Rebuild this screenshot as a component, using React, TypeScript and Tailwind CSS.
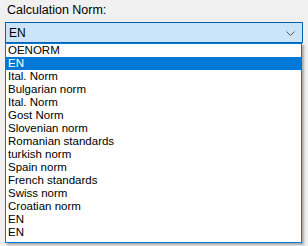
import React from "react";

const items = [
  "OENORM",
  "EN",
  "Ital. Norm",
  "Bulgarian norm",
  "Ital. Norm",
  "Gost Norm",
  "Slovenian norm",
  "Romanian standards",
  "turkish norm",
  "Spain norm",
  "French standards",
  "Swiss norm",
  "Croatian norm",
  "EN",
  "EN",
];

export default function App() {
  return (
    <div
      className="w-[308px] h-[246px] bg-[#f0f0f0] text-black overflow-hidden"
      style={{ fontFamily: '"Liberation Sans", Arial, sans-serif' }}
    >
      <div className="pl-[7px] pt-[3px] h-[22px] text-[12.5px] leading-[14px] text-[#000]">
        Calculation Norm:
      </div>
      <div className="ml-[5px] w-[298px] relative">
        <div className="h-[21px] border border-[#0063b1] bg-[#cce4f7] flex items-center justify-between pl-[3px] pr-[7px] text-[12px]">
          <span>EN</span>
          <svg width="9" height="5" viewBox="0 0 9 5" className="mt-[2px]">
            <path d="M0.5 0.5 L4.5 4.5 L8.5 0.5" fill="none" stroke="#555" strokeWidth="1" />
          </svg>
        </div>
        <div className="w-[297px] border border-[#0078d7] bg-white shadow-[2px_2px_2px_rgba(0,0,0,0.3)] text-[11.5px] leading-[13px] pb-[3px]">
          {items.map((it, i) => (
            <div
              key={i}
              className={
                "h-[13px] pl-[2px] whitespace-nowrap " +
                (i === 1 ? "bg-[#0078d7] text-white" : "text-black")
              }
            >
              {it}
            </div>
          ))}
        </div>
      </div>
    </div>
  );
}
